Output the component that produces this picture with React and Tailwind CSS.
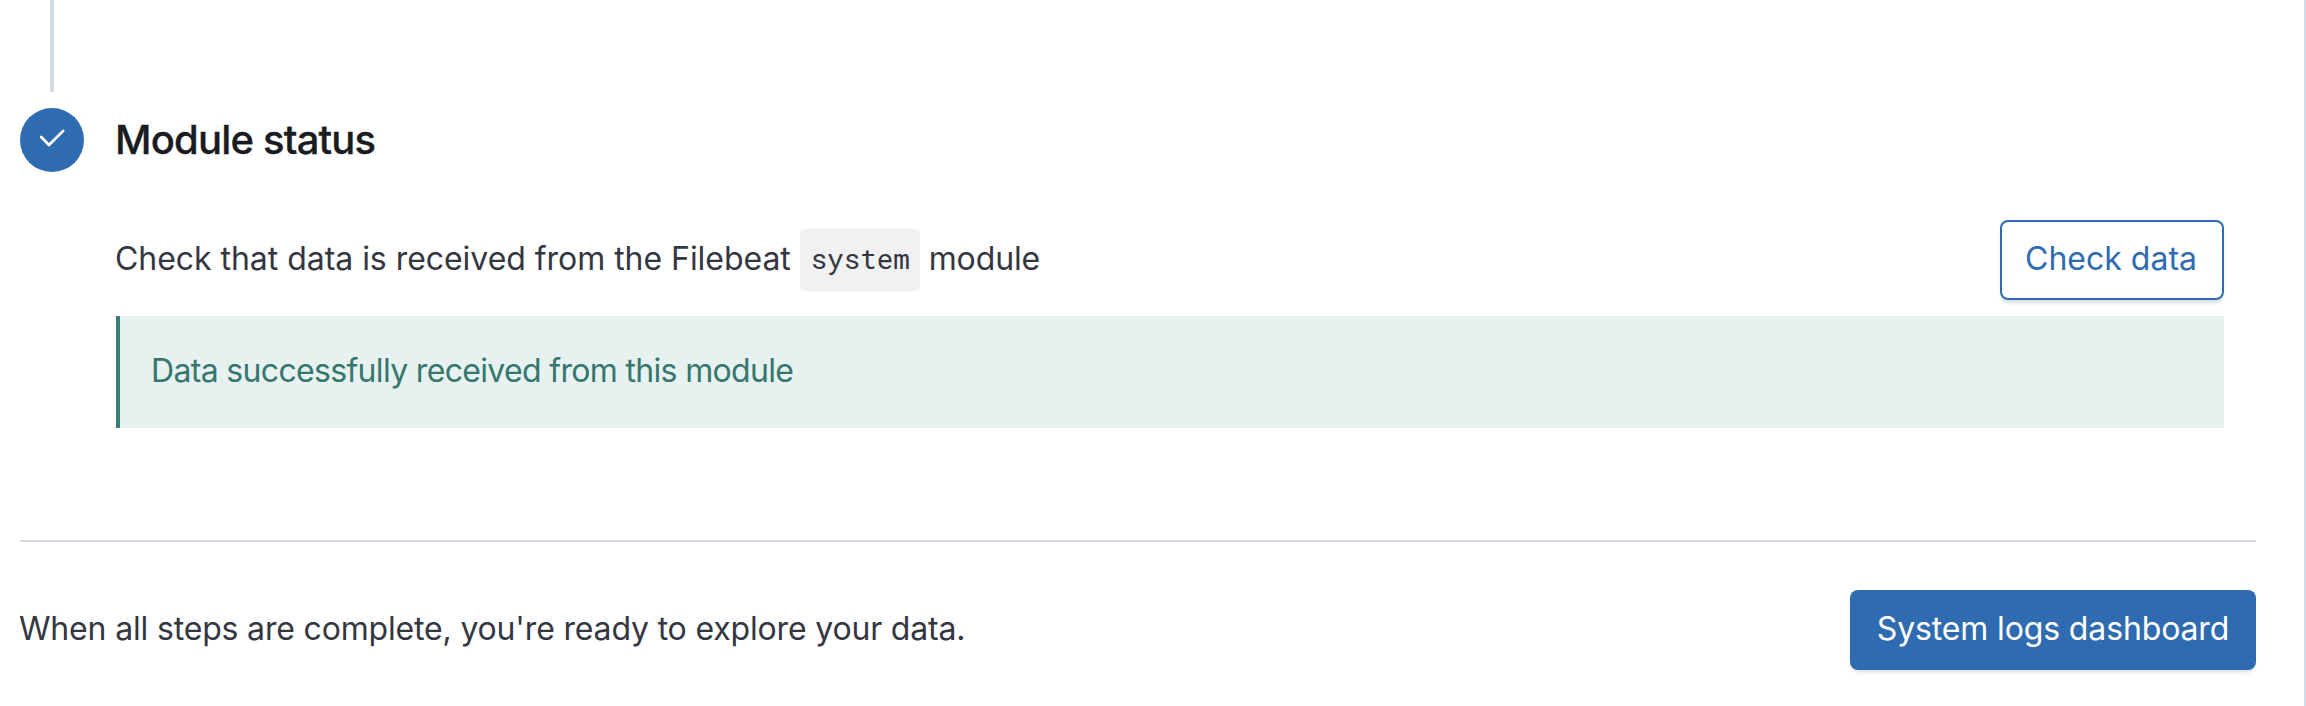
function CheckIcon() {
  return (
    <svg viewBox="0 0 32 32" className="h-8 w-8" fill="none" stroke="#fff" strokeWidth="2.7" strokeLinecap="round" strokeLinejoin="round">
      <path d="M5.2 13 L13 21 L27.2 6.9" />
    </svg>
  );
}

function StepMarker() {
  return (
    <div className="flex w-16 flex-col items-center">
      <div className="h-[92px] w-1 bg-[#d3dae6]" />
      <div className="mt-4 flex h-16 w-16 items-center justify-center rounded-full bg-[#2f6bb0]">
        <CheckIcon />
      </div>
    </div>
  );
}

export default function App() {
  return (
    <div className="h-[706px] w-[2306px] overflow-hidden border-r-2 border-[#d3dae6] bg-white pl-5 font-['Inter','Liberation_Sans',sans-serif] text-[32px] leading-[48px] text-[#343741]">
      <section className="flex h-[540px] gap-8">
        <StepMarker />
        <div className="flex w-[2108px] flex-col pt-[108px]">
          <h2 className="-ml-px h-16 text-[40px] leading-[64px] font-medium tracking-[-0.82px] text-[#1a1c21] [-webkit-text-stroke:0.3px_#1a1c21]">Module status</h2>
          <div className="mt-12 flex h-20 items-center justify-between">
            <p className="-ml-px flex items-center whitespace-pre">
              <span className="pb-0.5 tracking-[-0.04px]">Check that data is received from the Filebeat </span>
              <code className="flex h-16 w-[120px] items-center justify-center rounded-lg bg-[#f1f1f1] pb-1 pl-px font-['Roboto_Mono','DejaVu_Sans_Mono',monospace] text-[27.5px]">system</code>
              <span className="pb-0.5 tracking-[-0.1px]"> module</span>
            </p>
            <button className="flex h-20 w-[224px] items-center justify-center rounded-lg border-2 border-[#2f6bb0] pr-0.5 pb-0.5 text-[#2f6bb0] shadow-[0_4px_4px_-2px_rgba(54,97,126,0.3)]">Check data</button>
          </div>
          <div className="mt-4 flex h-28 items-center border-l-4 border-[#387c72] bg-[#e7f1ef] pb-0.5 pl-[31px] text-[#35776e]">
            <span className="tracking-[-0.67px]">Data successfully received from this module</span>
          </div>
        </div>
      </section>
      <footer className="w-[2236px] border-t-2 border-[#d3dae6] pt-12">
        <div className="flex items-center justify-between">
          <p className="-ml-px pb-0.5 tracking-[-0.17px]">When all steps are complete, you're ready to explore your data.</p>
          <button className="flex h-20 w-[406px] items-center justify-center rounded-lg bg-[#2f6bb0] pb-0.5 tracking-[-0.14px] text-white shadow-[0_4px_4px_-2px_rgba(54,97,126,0.2)]">System logs dashboard</button>
        </div>
      </footer>
    </div>
  );
}
